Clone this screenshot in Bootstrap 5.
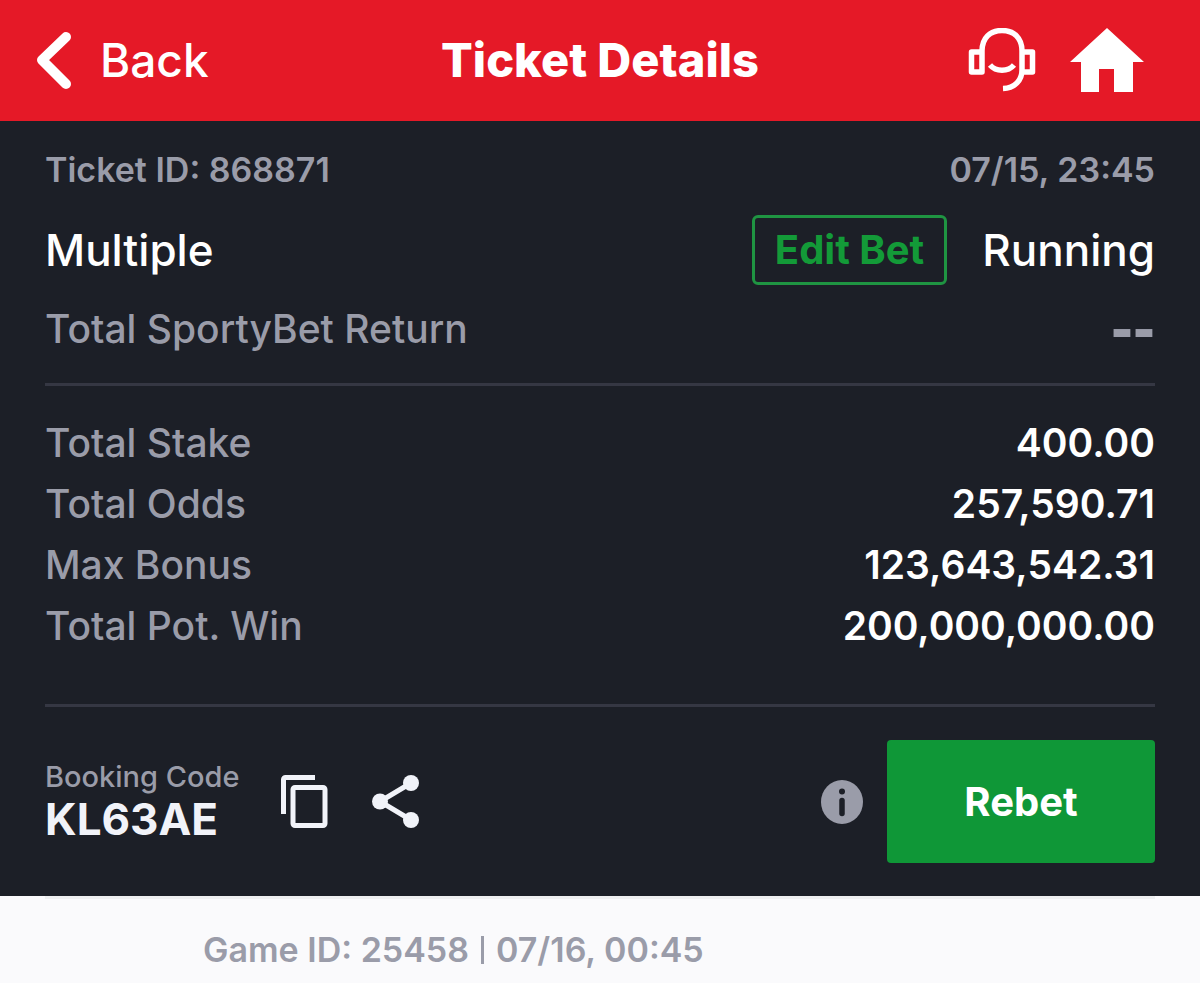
<!DOCTYPE html>
<html lang="en">
<head>
<meta charset="utf-8">
<meta name="viewport" content="width=device-width, initial-scale=1">
<title>Ticket Details</title>
<link href="https://cdn.jsdelivr.net/npm/bootstrap@5.3.0/dist/css/bootstrap.min.css" rel="stylesheet">
<style>
  body { font-family: Inter, "Liberation Sans", sans-serif; background: #fafafc; color: #fff; }
  .topbar { grid-template-columns: 1fr auto 1fr; background: #e51927; min-height: 121px; padding: 0 36px 2px; }
  .tools { gap: 34px; padding-right: 20px; }
  .back-link { font-size: 46px; font-weight: 500; line-height: 56px; gap: 28px; }
  .page-title { font-size: 47px; font-weight: 800; line-height: 52px; }
  .ticket { background: #1c1f27; padding: 25px 45px 33px; }
  .muted { color: #9a9ca9; }
  .meta { font-size: 34px; font-weight: 600; line-height: 48px; }
  .status-row { font-size: 44px; font-weight: 500; line-height: 56px; margin-top: 21px; }
  .btn-edit { color: #139a38; border: 3px solid #1f9442; border-radius: 6px; font-size: 40px; font-weight: 700; line-height: 44px; padding: 10px 20px; margin-right: 35px; }
  .figures { font-size: 39px; font-weight: 500; line-height: 48px; }
  .no-value { font-family: "Liberation Sans", sans-serif; font-size: 66px; font-weight: 700; line-height: 44px; }
  .rule { border-top: 3px solid #353743; }
  .return-row { margin: 20px 0 30px; }
  .figures dl { line-height: 61px; padding: 26px 0 48px; }
  .figures dt { font-weight: 500; }
  .figures dd { font-weight: 600; }
  .booking { padding-top: 33px; }
  .booking-label { font-size: 29px; font-weight: 500; line-height: 34px; }
  .booking-code { font-size: 44px; font-weight: 700; line-height: 50px; color: #f1f3f9; }
  .icon-btn { background: none; border: 0; padding: 0; color: #f1f3f9; line-height: 0; }
  .code-actions { gap: 44px; margin-left: 40px; }
  .btn-rebet { background: #0f9737; color: #fff; border: 0; border-radius: 4px; width: 268px; height: 123px; font-size: 40px; font-weight: 700; }
  .games { padding: 0 45px; }
  .game { border-top: 3px solid #eeeff1; padding: 27px 0 0 158px; }
  .divider { width: 3px; height: 28px; margin: 0 12px; background: #9a9ca9; }
</style>
</head>
<body>
<header class="topbar d-grid align-items-center">
  <div class="d-flex">
    <a href="#" class="back-link d-flex align-items-center text-white text-decoration-none">
      <svg width="36" height="58" viewBox="0 0 36 58" fill="none" stroke="#fff" stroke-width="10" stroke-linecap="round" stroke-linejoin="round"><path d="M30 6 6 29l24 24"/></svg>
      Back
    </a>
  </div>
  <h1 class="page-title m-0">Ticket Details</h1>
  <div class="tools d-flex justify-content-end align-items-center">
    <a href="#" aria-label="Support" class="d-flex"><svg width="68" height="64" viewBox="0 0 68 64" fill="none" stroke="#fff" stroke-width="5.500" stroke-linejoin="round"><path d="M14 24H3.500v20H14zM54 24h10.500v20H54M14 27v-4C14 10 22 2.500 34 2.500S54 10 54 23v19c0 10-7 18-19 18.500"/><path d="M22 37c6 7 18 7 24 0"/></svg></a>
    <a href="#" aria-label="Home" class="d-flex"><svg width="74" height="64" viewBox="0 0 74 64" fill="#fff"><path d="M37 0 74 34H63v30H44V41H29v23H11V34H0z"/></svg></a>
  </div>
</header>

<main>
  <section class="ticket">
    <div class="meta muted d-flex justify-content-between">
      <span>Ticket ID: 868871</span><span>07/15, 23:45</span>
    </div>
    <div class="status-row d-flex align-items-center">
      <span class="me-auto">Multiple</span>
      <button type="button" class="btn btn-edit">Edit Bet</button>
      <span>Running</span>
    </div>
    <div class="figures">
      <div class="return-row muted d-flex justify-content-between">
        <span>Total SportyBet Return</span><span class="no-value">--</span>
      </div>
      <div class="rule"></div>
      <dl class="m-0">
        <div class="d-flex justify-content-between"><dt class="muted">Total Stake</dt><dd class="m-0">400.00</dd></div>
        <div class="d-flex justify-content-between"><dt class="muted">Total Odds</dt><dd class="m-0">257,590.71</dd></div>
        <div class="d-flex justify-content-between"><dt class="muted">Max Bonus</dt><dd class="m-0">123,643,542.31</dd></div>
        <div class="d-flex justify-content-between"><dt class="muted">Total Pot. Win</dt><dd class="m-0">200,000,000.00</dd></div>
      </dl>
      <div class="rule"></div>
    </div>
    <div class="booking d-flex align-items-center">
      <div>
        <div class="booking-label muted">Booking Code</div>
        <div class="booking-code">KL63AE</div>
      </div>
      <div class="code-actions d-flex align-items-center">
        <button type="button" class="icon-btn" aria-label="Copy code"><svg width="48" height="54" viewBox="0 0 48 54" fill="none" stroke="currentColor" stroke-width="5"><path d="M3.500 39V4.500a2 2 0 0 1 2-2H35"/><rect x="13" y="12.500" width="32" height="38" rx="2"/></svg></button>
        <button type="button" class="icon-btn" aria-label="Share"><svg width="47" height="53" viewBox="0 0 47 53" fill="currentColor"><path d="M39 8 8 26.500 39 45" fill="none" stroke="currentColor" stroke-width="5"/><circle cx="8" cy="26.500" r="8"/><circle cx="39" cy="8" r="8"/><circle cx="39" cy="45" r="8"/></svg></button>
      </div>
      <button type="button" class="icon-btn ms-auto me-4" aria-label="Information"><svg width="42" height="44" viewBox="0 0 42 44"><ellipse cx="21" cy="22" rx="21" ry="22" fill="#9a9ca9"/><circle cx="21" cy="11.500" r="3" fill="#1c1f27"/><path d="M21 20.500v13" stroke="#1c1f27" stroke-width="5.500" stroke-linecap="round"/></svg></button>
      <button type="button" class="btn btn-rebet">Rebet</button>
    </div>
  </section>

  <section class="games">
    <article class="game">
      <div class="meta muted d-flex align-items-center">
        <span>Game ID: 25458</span><span class="divider"></span><span>07/16, 00:45</span>
      </div>
    </article>
  </section>
</main>
<script src="https://cdn.jsdelivr.net/npm/bootstrap@5.3.0/dist/js/bootstrap.bundle.min.js"></script>
</body>
</html>
